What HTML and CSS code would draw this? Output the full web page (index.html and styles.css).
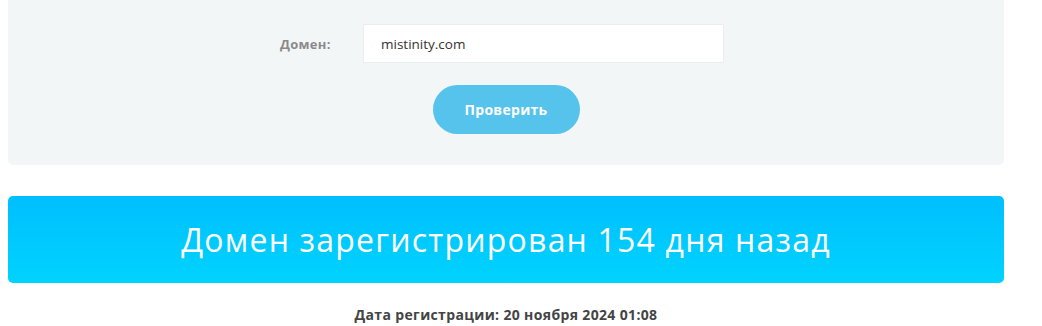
FILE: index.html
```html
<!DOCTYPE html>
<html lang="ru">
<head>
    <meta charset="UTF-8">
    <meta name="viewport" content="width=device-width, initial-scale=1.0">
    <title>Проверка возраста домена</title>
    <link rel="stylesheet" href="styles.css">
</head>
<body>

    <div class="container">
        <form class="check-form" onsubmit="return false;">
            <div class="form-row">
                <label class="form-label" for="domain">Домен:</label>
                <input class="form-input" type="text" id="domain" name="domain" value="mistinity.com">
            </div>
            <div class="form-actions">
                <button class="btn-check" type="submit">Проверить</button>
            </div>
        </form>

        <div class="result-banner">Домен зарегистрирован 154 дня назад</div>

        <div class="result-date">Дата регистрации: 20 ноября 2024 01:08</div>
    </div>

</body>
</html>
```

FILE: styles.css
```css
body {
    font-family: "Open Sans", "Liberation Sans", Arial, sans-serif;
    margin: 0;
    padding: 0 8px;
    background-color: #fff;
    color: #333;
}
.container { width: 996px; }

.check-form {
    background: #f3f6f7;
    border-radius: 0 0 5px 5px;
    padding: 24px 0 31px;
}
.form-row {
    display: flex;
    justify-content: center;
    align-items: center;
    padding-right: 8px;
}
.form-label {
    width: 83px;
    font-size: 13px;
    font-weight: 700;
    letter-spacing: 0.3px;
    color: #8a8a8a;
}
.form-input {
    box-sizing: border-box;
    width: 361px;
    height: 39px;
    padding: 0 17px;
    border: 1px solid #ebeef0;
    background: #fff;
    font-family: "Open Sans", "Liberation Sans", Arial, sans-serif;
    font-size: 13.5px;
    color: #333;
    outline: none;
}
.form-actions { display: flex; justify-content: center; margin-top: 22px; }
.btn-check {
    width: 147px;
    height: 49px;
    border: 0;
    border-radius: 25px;
    background: #55c3ec;
    color: #fff;
    font-family: "Open Sans", "Liberation Sans", Arial, sans-serif;
    font-size: 14px;
    font-weight: 700;
    letter-spacing: 0.3px;
    cursor: pointer;
}

.result-banner {
    margin-top: 31px;
    height: 87px;
    display: flex;
    align-items: center;
    justify-content: center;
    border-radius: 5px;
    background: linear-gradient(to bottom, #00bffe, #00d3fe);
    color: #fff;
    font-size: 32px;
    font-weight: 400;
    letter-spacing: 1.2px;
}
.result-date {
    margin-top: 22px;
    text-align: center;
    font-size: 14px;
    font-weight: 700;
    letter-spacing: 0.35px;
    color: #444;
}
```
